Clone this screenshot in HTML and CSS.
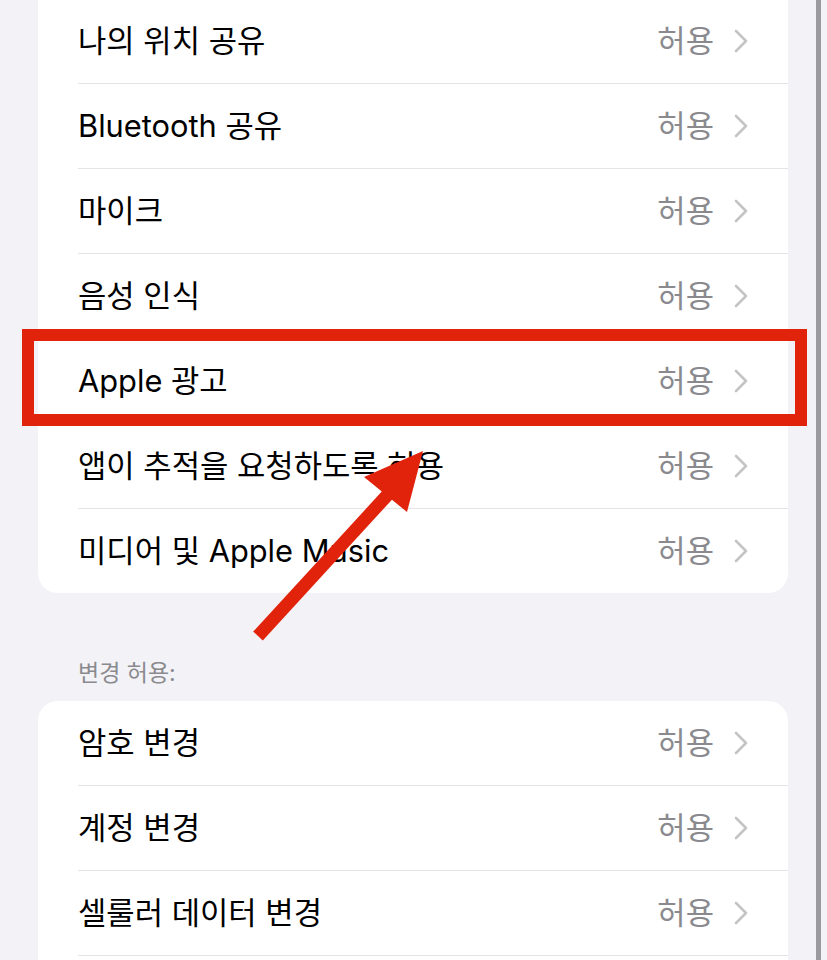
FILE: index.html
```html
<!DOCTYPE html>
<html lang="ko">
<head>
<meta charset="utf-8">
<title>콘텐츠 및 개인정보 보호 제한</title>
<link rel="stylesheet" href="styles.css">
</head>
<body>
<div class="page">
  <section class="card card-first">
    <div class="row"><div class="row-inner"><span class="label">나의 위치 공유</span><span class="value">허용</span><svg class="chev" viewBox="0 0 14 24"><path d="M2 2 L12 12 L2 22"/></svg></div></div>
    <div class="row"><div class="row-inner"><span class="label">Bluetooth 공유</span><span class="value">허용</span><svg class="chev" viewBox="0 0 14 24"><path d="M2 2 L12 12 L2 22"/></svg></div></div>
    <div class="row"><div class="row-inner"><span class="label">마이크</span><span class="value">허용</span><svg class="chev" viewBox="0 0 14 24"><path d="M2 2 L12 12 L2 22"/></svg></div></div>
    <div class="row"><div class="row-inner"><span class="label">음성 인식</span><span class="value">허용</span><svg class="chev" viewBox="0 0 14 24"><path d="M2 2 L12 12 L2 22"/></svg></div></div>
    <div class="row"><div class="row-inner"><span class="label">Apple 광고</span><span class="value">허용</span><svg class="chev" viewBox="0 0 14 24"><path d="M2 2 L12 12 L2 22"/></svg></div></div>
    <div class="row"><div class="row-inner"><span class="label">앱이 추적을 요청하도록 허용</span><span class="value">허용</span><svg class="chev" viewBox="0 0 14 24"><path d="M2 2 L12 12 L2 22"/></svg></div></div>
    <div class="row"><div class="row-inner"><span class="label">미디어 및 Apple Music</span><span class="value">허용</span><svg class="chev" viewBox="0 0 14 24"><path d="M2 2 L12 12 L2 22"/></svg></div></div>
  </section>

  <div class="section-header">변경 허용:</div>

  <section class="card">
    <div class="row"><div class="row-inner"><span class="label">암호 변경</span><span class="value">허용</span><svg class="chev" viewBox="0 0 14 24"><path d="M2 2 L12 12 L2 22"/></svg></div></div>
    <div class="row"><div class="row-inner"><span class="label">계정 변경</span><span class="value">허용</span><svg class="chev" viewBox="0 0 14 24"><path d="M2 2 L12 12 L2 22"/></svg></div></div>
    <div class="row"><div class="row-inner"><span class="label">셀룰러 데이터 변경</span><span class="value">허용</span><svg class="chev" viewBox="0 0 14 24"><path d="M2 2 L12 12 L2 22"/></svg></div></div>
    <div class="row"><div class="row-inner"></div></div>
  </section>

  <div class="scroll-track"></div>
  <div class="highlight"></div>
  <svg class="arrow" viewBox="0 0 827 960" width="827" height="960">
    <line x1="258" y1="636" x2="392" y2="490" />
    <polygon points="423,451 364,477 407,512" />
  </svg>
</div>
</body>
</html>
```

FILE: styles.css
```css
* { box-sizing: border-box; }

html, body {
  margin: 0;
  padding: 0;
  background: #f2f2f7;
}

body {
  font-family: "Inter", "Noto Sans CJK KR", "Noto Sans", sans-serif;
  color: #000;
  -webkit-font-smoothing: antialiased;
}

.page {
  position: relative;
  width: 827px;
  height: 960px;
  overflow: hidden;
  padding: 0 39px 0 38px;
}

.card {
  background: #fff;
  border-radius: 20px;
  overflow: hidden;
}

.card-first {
  margin-top: -20px;
  padding-top: 19px;
}

.row {
  padding-left: 40px;
}

.row-inner {
  display: flex;
  align-items: center;
  height: 85px;
  padding-right: 40px;
  border-bottom: 1px solid #e3e3e8;
}

.row:last-child .row-inner {
  border-bottom: none;
  height: 84px;
}

.label,
.value {
  font-size: 30.8px;
  line-height: 40px;
  padding-bottom: 1px;
}

.label {
  flex: 1;
  white-space: nowrap;
}

.value {
  color: #8a8a8e;
  margin-right: 20px;
}

.chev {
  width: 14px;
  height: 24px;
  fill: none;
  stroke: #c4c4c7;
  stroke-width: 2.6;
  stroke-linecap: round;
  stroke-linejoin: round;
}

.section-header {
  padding: 68px 0 0 40px;
  height: 108px;
  font-size: 23px;
  line-height: 24px;
  color: #8a8a8e;
}

.scroll-track {
  position: absolute;
  top: 0;
  left: 816px;
  width: 5px;
  height: 960px;
  background: #9a9a9f;
}

.highlight {
  position: absolute;
  left: 22px;
  top: 329px;
  width: 785px;
  height: 97px;
  border: 12px solid #e1230c;
}

.arrow {
  position: absolute;
  left: 0;
  top: 0;
  pointer-events: none;
}

.arrow line {
  stroke: #e1230c;
  stroke-width: 13;
}

.arrow polygon {
  fill: #e1230c;
}
```
